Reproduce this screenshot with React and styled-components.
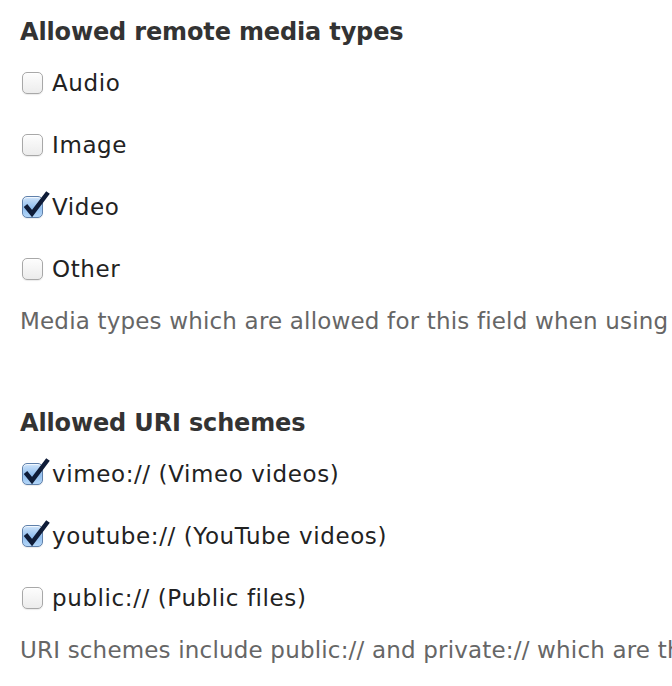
import React from "react";
import styled, { createGlobalStyle } from "styled-components";

const Global = createGlobalStyle`
  html, body { margin: 0; padding: 0; background: #fff; }
  body { font-family: "DejaVu Sans", "Liberation Sans", sans-serif; color: #333; }
`;

const Page = styled.div`
  padding: 15px 0 0 20px;
  width: 672px;
  height: 686px;
  box-sizing: border-box;
  overflow: hidden;
  white-space: nowrap;
`;

const Section = styled.section`
  display: flex;
  flex-direction: column;
  margin-bottom: ${(p) => p.$gap || 0}px;
`;

const Heading = styled.h2`
  margin: 0 0 15px 0;
  font-size: 24px;
  line-height: 34px;
  font-weight: bold;
  letter-spacing: -0.15px;
  color: #333;
`;

const Option = styled.label`
  display: flex;
  align-items: center;
  gap: 9px;
  height: 38px;
  margin-bottom: 24px;
  font-size: 23px;
  letter-spacing: 0.6px;
  color: #222;
`;

const Box = styled.span`
  position: relative;
  width: 21px;
  height: 22px;
  margin-left: 2px;
  box-sizing: border-box;
  border-radius: 5px;
  border: 1px solid ${(p) => (p.$checked ? "#5f80aa" : "#a8a8a8")};
  background: ${(p) =>
    p.$checked
      ? "linear-gradient(#cfe4fa, #8fbdee 55%, #b3d6f8)"
      : "linear-gradient(#fdfdfd, #ececec)"};
  box-shadow: inset 0 1px 1px rgba(255,255,255,0.8), 0 1px 1px rgba(0,0,0,0.08);
  flex: none;
`;

const Check = styled.svg`
  position: absolute;
  left: 0;
  top: -1px;
  width: 22px;
  height: 22px;
  overflow: visible;
`;

const Description = styled.p`
  margin: -6px 0 0 0;
  font-size: 23px;
  letter-spacing: 0.18px;
  line-height: 30px;
  color: #666;
`;

function Checkbox({ checked }) {
  return (
    <Box $checked={checked}>
      {checked && (
        <Check viewBox="0 0 22 22">
          <path
            d="M2.5 9.5 L9 17.5 L25 -3.5"
            fill="none"
            stroke="#0f1c38"
            strokeWidth="4.5"
            strokeLinejoin="miter"
            strokeLinecap="butt"
          />
        </Check>
      )}
    </Box>
  );
}

const media = [
  ["Audio", false],
  ["Image", false],
  ["Video", true],
  ["Other", false],
];
const schemes = [
  ["vimeo:// (Vimeo videos)", true],
  ["youtube:// (YouTube videos)", true],
  ["public:// (Public files)", false],
];

export default function App() {
  return (
    <>
      <Global />
      <Page>
        <Section $gap={70}>
          <Heading>Allowed remote media types</Heading>
          {media.map(([t, c]) => (
            <Option key={t}>
              <Checkbox checked={c} />
              {t}
            </Option>
          ))}
          <Description>
            Media types which are allowed for this field when using remote streams.
          </Description>
        </Section>
        <Section>
          <Heading>Allowed URI schemes</Heading>
          {schemes.map(([t, c]) => (
            <Option key={t}>
              <Checkbox checked={c} />
              {t}
            </Option>
          ))}
          <Description>
            URI schemes include public:// and private:// which are the Drupal files directories.
          </Description>
        </Section>
      </Page>
    </>
  );
}
